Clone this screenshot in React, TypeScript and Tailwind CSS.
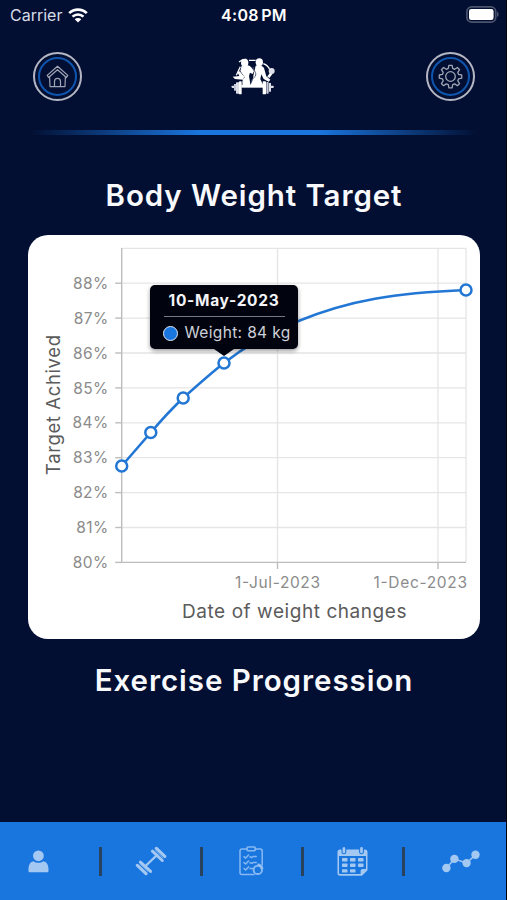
import type { ReactNode } from 'react';

const yTicks = [88, 87, 86, 85, 84, 83, 82, 81, 80];
const points = [
  [121.7, 466],
  [150.8, 432.5],
  [183.2, 398],
  [224, 363],
  [466, 290],
];

function WifiIcon() {
  return (
    <svg width="20" height="15" viewBox="0 0 20 15" fill="none">
      <path d="M1.2 5.1C6 .4 14 .4 18.8 5.1" stroke="white" strokeWidth="2.7" />
      <path d="M4.5 8.7c3.1-3 7.9-3 11 0" stroke="white" strokeWidth="2.5" />
      <path d="M10 14.4 6.7 11.2c1.8-1.7 4.8-1.7 6.6 0z" fill="white" />
    </svg>
  );
}

function BatteryIcon() {
  return (
    <svg width="34" height="17" viewBox="0 0 34 17">
      <rect x=".9" y=".9" width="28.8" height="15.2" rx="4.6" fill="none" stroke="#4b536c" strokeWidth="1.7" />
      <rect x="3" y="3" width="24.6" height="11" rx="2.2" fill="white" />
      <path d="M31 5.8c2.2.5 2.2 4.7 0 5.2z" fill="#4b536c" />
    </svg>
  );
}

function RoundButton({ label, children }: { label: string; children: ReactNode }) {
  return (
    <button aria-label={label} className="flex size-[49px] items-center justify-center rounded-full border-2 border-[#b4b7c3]">
      <span className="flex size-[39px] items-center justify-center rounded-full border-2 border-[#0f55ad]">{children}</span>
    </button>
  );
}

function HomeIcon() {
  return (
    <svg width="23" height="23" viewBox="0 0 23 23" fill="none" stroke="#a0a4b3" strokeWidth="1.2" strokeLinejoin="round">
      <path d="M11.5 1.3 1.2 10.4l1.4 2.1 8.9-7.8 8.9 7.8 1.4-2.1z" />
      <path d="M3.6 11.8 4 21.6h4.5v-5.2c0-4 6-4 6 0v5.2H19l.4-9.8M8.5 21.6h6" />
    </svg>
  );
}

function GearIcon() {
  return (
    <svg width="25" height="25" viewBox="0 0 25 25" fill="none" stroke="#a0a4b3" strokeWidth="1.3" strokeLinejoin="round">
      <path d="M10.9 1.3h3.2l.6 3.1 2 .9 2.7-1.8 2.2 2.2-1.8 2.7.8 2 3.1.6v3.2l-3.1.6-.8 2 1.8 2.7-2.2 2.2-2.7-1.8-2 .8-.6 3.1h-3.2l-.6-3.1-2-.8-2.7 1.8-2.2-2.2 1.8-2.7-.8-2-3.1-.6v-3.2l3.1-.6.8-2-1.8-2.7 2.2-2.2 2.7 1.8 2-.9z" />
      <circle cx="12.5" cy="12.5" r="4.8" />
    </svg>
  );
}

function FitnessLogo() {
  return (
    <svg width="46" height="38" viewBox="34 36 138 114" fill="white">
      <path d="M62 62 50 88M58 48l10-6 12-2M88 43h20M131 53c11 4 17 12 20 19" fill="none" stroke="white" strokeWidth="4" />
      <ellipse cx="75" cy="50" rx="11" ry="12" />
      <ellipse cx="119" cy="49" rx="11" ry="12" />
      <path d="M66 59c9-3 21-3 28 4l9 12-4 9-8-4-3 10 5 30H70c-4-11-2-20 5-26L62 75z" />
      <path d="m60 76 14 16-4 9-24-2-7-7 20-2-6-12z" />
      <path d="M108 59c9-3 20-1 25 7l7 25 12 10-5 6-15-8-7-14-3 14 10 22H92c2-13 10-19 9-32z" />
      <path d="M101 63c-4 8 10 14 7 24-1 8-14 12-12 22" fill="none" stroke="#59617a" strokeWidth="3" />
      <path d="m146 94 10-14" stroke="white" strokeWidth="8" />
      <circle cx="156" cy="75" r="9" fill="#dddfe8" />
      <path d="M65 116h68v9H65z" />
      <rect x="36" y="119" width="14" height="7" rx="2" fill="#dddfe8" />
      <rect x="43" y="114" width="8" height="20" fill="#c6cad8" />
      <rect x="49" y="109" width="10" height="34" rx="2" fill="#dddfe8" />
      <rect x="58" y="106" width="8" height="39" rx="2" />
      <rect x="129" y="106" width="10" height="39" rx="2" />
      <rect x="140" y="108" width="7" height="35" rx="2" fill="#c6cad8" />
      <rect x="148" y="111" width="6" height="26" rx="1" fill="#dddfe8" />
      <rect x="153" y="119" width="9" height="7" rx="2" fill="#dddfe8" />
    </svg>
  );
}

function WeightChart() {
  return (
    <svg className="block" width="452" height="404" viewBox="28 235 452 404">
      <g stroke="#e5e5e5" strokeWidth="1.3">
        <path d="M121.7 248.3H466M277.5 248v314M438 248v314M466 248v314" />
        {yTicks.slice(0, 8).map((t, i) => (
          <path key={t} d={`M121.7 ${283.2 + i * 34.9}H466`} />
        ))}
      </g>
      <g stroke="#bdbdbd" strokeWidth="1.4">
        <path d="M121.7 248v314.4M121.7 562.4H466M277.5 562.4v6.5M438 562.4v6.5" />
        {yTicks.map((t, i) => (
          <path key={t} d={`M115.2 ${283.2 + i * 34.9}h6.5`} />
        ))}
      </g>
      <g fill="#8b8b8b" fontSize="15.5">
        {yTicks.map((t, i) => (
          <text key={t} x="108.5" y={288.8 + i * 34.9} textAnchor="end" letterSpacing=".35">{t}%</text>
        ))}
        <text x="235" y="588" textLength="85">1-Jul-2023</text>
        <text x="373.5" y="588" textLength="93.5">1-Dec-2023</text>
      </g>
      <g fill="#5b5b5b" fontSize="19">
        <text x="182" y="617.5" textLength="224.5">Date of weight changes</text>
        <text transform="translate(60 475) rotate(-90)" textLength="140" fontSize="18.5">Target Achived</text>
      </g>
      <path
        d="M121.7 466 150.8 432.5C161 420.5 172 408.5 183.2 398 196 386.5 210 374 224 363 244 347.5 268 332 298.5 321 350 300 395 293 466 290"
        fill="none"
        stroke="#2377d4"
        strokeWidth="2.6"
      />
      {points.map(([x, y]) => (
        <circle key={x} cx={x} cy={y} r="5.5" fill="white" stroke="#2377d4" strokeWidth="2.5" />
      ))}
    </svg>
  );
}

function ChartTooltip() {
  return (
    <div className="absolute top-[50px] left-[122px] h-[64px] w-[148px] rounded-[5px] bg-[#01040f] px-[13.5px] pt-[6px] shadow-[0_2px_4px_rgba(0,0,0,0.4)]">
      <div className="text-center text-[15.5px] leading-5 font-bold tracking-[0.7px] whitespace-nowrap text-[#f4f4f8]">10-May-2023</div>
      <div className="mt-[5px] h-px bg-[#777b86]" />
      <div className="mt-[6px] flex items-center gap-[7px] text-[15.5px] leading-5 tracking-[0.35px] whitespace-nowrap text-[#cfd1d8]">
        <span className="-ml-px size-[15px] shrink-0 rounded-full border-[1.5px] border-[#e4eaf5] bg-[#1a76df]" />
        Weight: 84 kg
      </div>
      <svg className="absolute top-full left-[64px]" width="20" height="7" viewBox="0 0 20 7">
        <path d="M0 0h20l-10 7z" fill="#01040f" />
      </svg>
    </div>
  );
}

function UserIcon() {
  return (
    <svg width="21" height="23" viewBox="0 0 21 23" fill="#a3c8f2">
      <circle cx="10.4" cy="5.8" r="5.4" />
      <path d="M5.5 11.2c3 2 6.8 2 9.8 0 4 .8 5.5 4.5 5.2 9.8 0 .8-.5 1.3-1.4 1.3H1.8C.9 22.3.5 21.8.5 21c-.3-5.3 1.2-9 5-9.8z" />
    </svg>
  );
}

function DumbbellIcon() {
  return (
    <svg width="32" height="30" viewBox="0 0 32 30" fill="none" stroke="#a3c8f2" strokeLinecap="round">
      <path d="m11 19.5 10-9.5" strokeWidth="2.4" />
      <path d="m5.4 16.1 10.2 9.3M17.4 5.2l9.9 9.3" strokeWidth="3" />
      <path d="m2.4 19.4 8.6 8.2M21.4 2.4l8.4 7.9" strokeWidth="3.2" />
      <path d="m5 18 8 7.5M20 4.5l8 7.5" strokeWidth="1" opacity=".6" />
    </svg>
  );
}

function ChecklistIcon() {
  return (
    <svg width="25" height="30" viewBox="0 0 25 30" fill="none" stroke="#86b8f1" strokeWidth="1.5" strokeLinecap="round" strokeLinejoin="round">
      <path d="M8 3H3C1.7 3 1 3.7 1 5v21.4c0 1.3.7 2 2 2h12M16 3h5.2c1.3 0 2 .7 2 2v14" />
      <rect x="8" y="1" width="8.3" height="3.7" rx="1" />
      <path d="m5 10.7 1.7 1.4 2.8-3M11 10.8l1.8.7 1.4-1h3M5 16.6 6.7 18l2.8-3M11 16.7l2 .6 1.2-.8h3M5 22.5l1.7 1.4 2.8-3M11 22.5h2.6" />
      <circle cx="18.8" cy="23.9" r="4.2" strokeWidth="2" />
      <path d="M18.8 19.7v-1.9a5.3 5.3 0 0 1 5.2 5.2h-2c0-2-1.2-3.3-3.2-3.3z" fill="#a3c8f2" strokeWidth=".8" />
    </svg>
  );
}

function CalendarIcon() {
  return (
    <svg width="31" height="31" viewBox="0 0 31 31" fill="#a3c8f2">
      <path fillRule="evenodd" d="M3 3.6h25c1.7 0 2.5.9 2.5 2.5v17.8l-5.7 5.8H3c-1.6 0-2.5-.9-2.5-2.5V6.1C.5 4.5 1.4 3.6 3 3.6zM2 10v16.8c0 .9.4 1.3 1.3 1.3h20.3v-2.8c0-1.5.8-2.3 2.3-2.3H29V10z" />
      <g stroke="#1a76df" strokeWidth="1.1">
        <rect x="5" y=".5" width="3.8" height="7.3" rx="1.9" />
        <rect x="22.6" y=".5" width="3.8" height="7.3" rx="1.9" />
      </g>
      {[12, 17.6, 23.2].flatMap((y, row) =>
        [5, 13, 21].slice(0, row === 2 ? 2 : 3).map((x) => <rect key={`${x}-${y}`} x={x} y={y} width="5.5" height="3.4" rx=".7" />),
      )}
      <path d="M24.9 29.5v-3.8c0-1 .5-1.5 1.5-1.5h4.1z" />
    </svg>
  );
}

function TrendIcon() {
  return (
    <svg width="38" height="23" viewBox="0 0 38 23" fill="#a3c8f2">
      <path d="m4.4 18 8-9.1 12.2 4.2L33.5 4.7" fill="none" stroke="#a3c8f2" strokeWidth="1.5" />
      <circle cx="4.4" cy="18" r="4.2" />
      <circle cx="12.4" cy="8.9" r="4.2" />
      <circle cx="24.6" cy="13.1" r="4.2" />
      <circle cx="33.5" cy="4.7" r="4.2" />
    </svg>
  );
}

function Separator() {
  return <span className="h-[29px] w-[3px] shrink-0 bg-[#29435f]" />;
}

function NavItem({ children }: { children: ReactNode }) {
  return <div className="flex w-[98px] shrink-0 justify-center">{children}</div>;
}

export default function App() {
  return (
    <div className="flex h-[900px] w-[507px] flex-col overflow-hidden border-r border-[#01020c] bg-[#020f32] font-['Inter','Liberation_Sans',sans-serif]">
      <div className="grid h-[30px] shrink-0 grid-cols-3 items-center pr-[6px] pl-[10px] text-white">
        <div className="flex items-center gap-[6px] text-[16px] text-[#d7dbe8]">
          Carrier
          <WifiIcon />
        </div>
        <div className="pr-[2px] text-center text-[16px] font-semibold tracking-[0.3px] [word-spacing:-2px]">4:08 PM</div>
        <div className="flex justify-end pb-[2px]"><BatteryIcon /></div>
      </div>

      <header className="mt-[22px] flex h-[49px] shrink-0 items-center justify-between pr-[31px] pl-[33px]">
        <RoundButton label="Home"><HomeIcon /></RoundButton>
        <FitnessLogo />
        <RoundButton label="Settings"><GearIcon /></RoundButton>
      </header>

      <div className="mt-[29px] ml-[30px] h-[4.5px] w-[448px] shrink-0 bg-[linear-gradient(to_right,transparent,#1a76df_38%,#1a76df_64%,transparent)]" />

      <h1 className="mt-[40.5px] shrink-0 pl-[2px] text-center text-[29.5px] leading-10 font-semibold tracking-[0.9px] text-[#f8f9fd]">Body Weight Target</h1>

      <section className="relative mt-[20px] ml-[28px] h-[404px] w-[452px] shrink-0 rounded-[20px] bg-white">
        <WeightChart />
        <ChartTooltip />
      </section>

      <h2 className="mt-[21px] shrink-0 pl-[2px] text-center text-[29.5px] leading-10 font-semibold tracking-[0.95px] text-[#f8f9fd]">Exercise Progression</h2>

      <nav className="mt-auto flex h-[78px] shrink-0 items-center bg-[#1a76df]">
        <div className="w-[98.5px] shrink-0 pl-[28px]"><UserIcon /></div>
        <Separator />
        <NavItem><DumbbellIcon /></NavItem>
        <Separator />
        <NavItem><ChecklistIcon /></NavItem>
        <Separator />
        <NavItem><CalendarIcon /></NavItem>
        <Separator />
        <div className="pl-[37px]"><TrendIcon /></div>
      </nav>
    </div>
  );
}
